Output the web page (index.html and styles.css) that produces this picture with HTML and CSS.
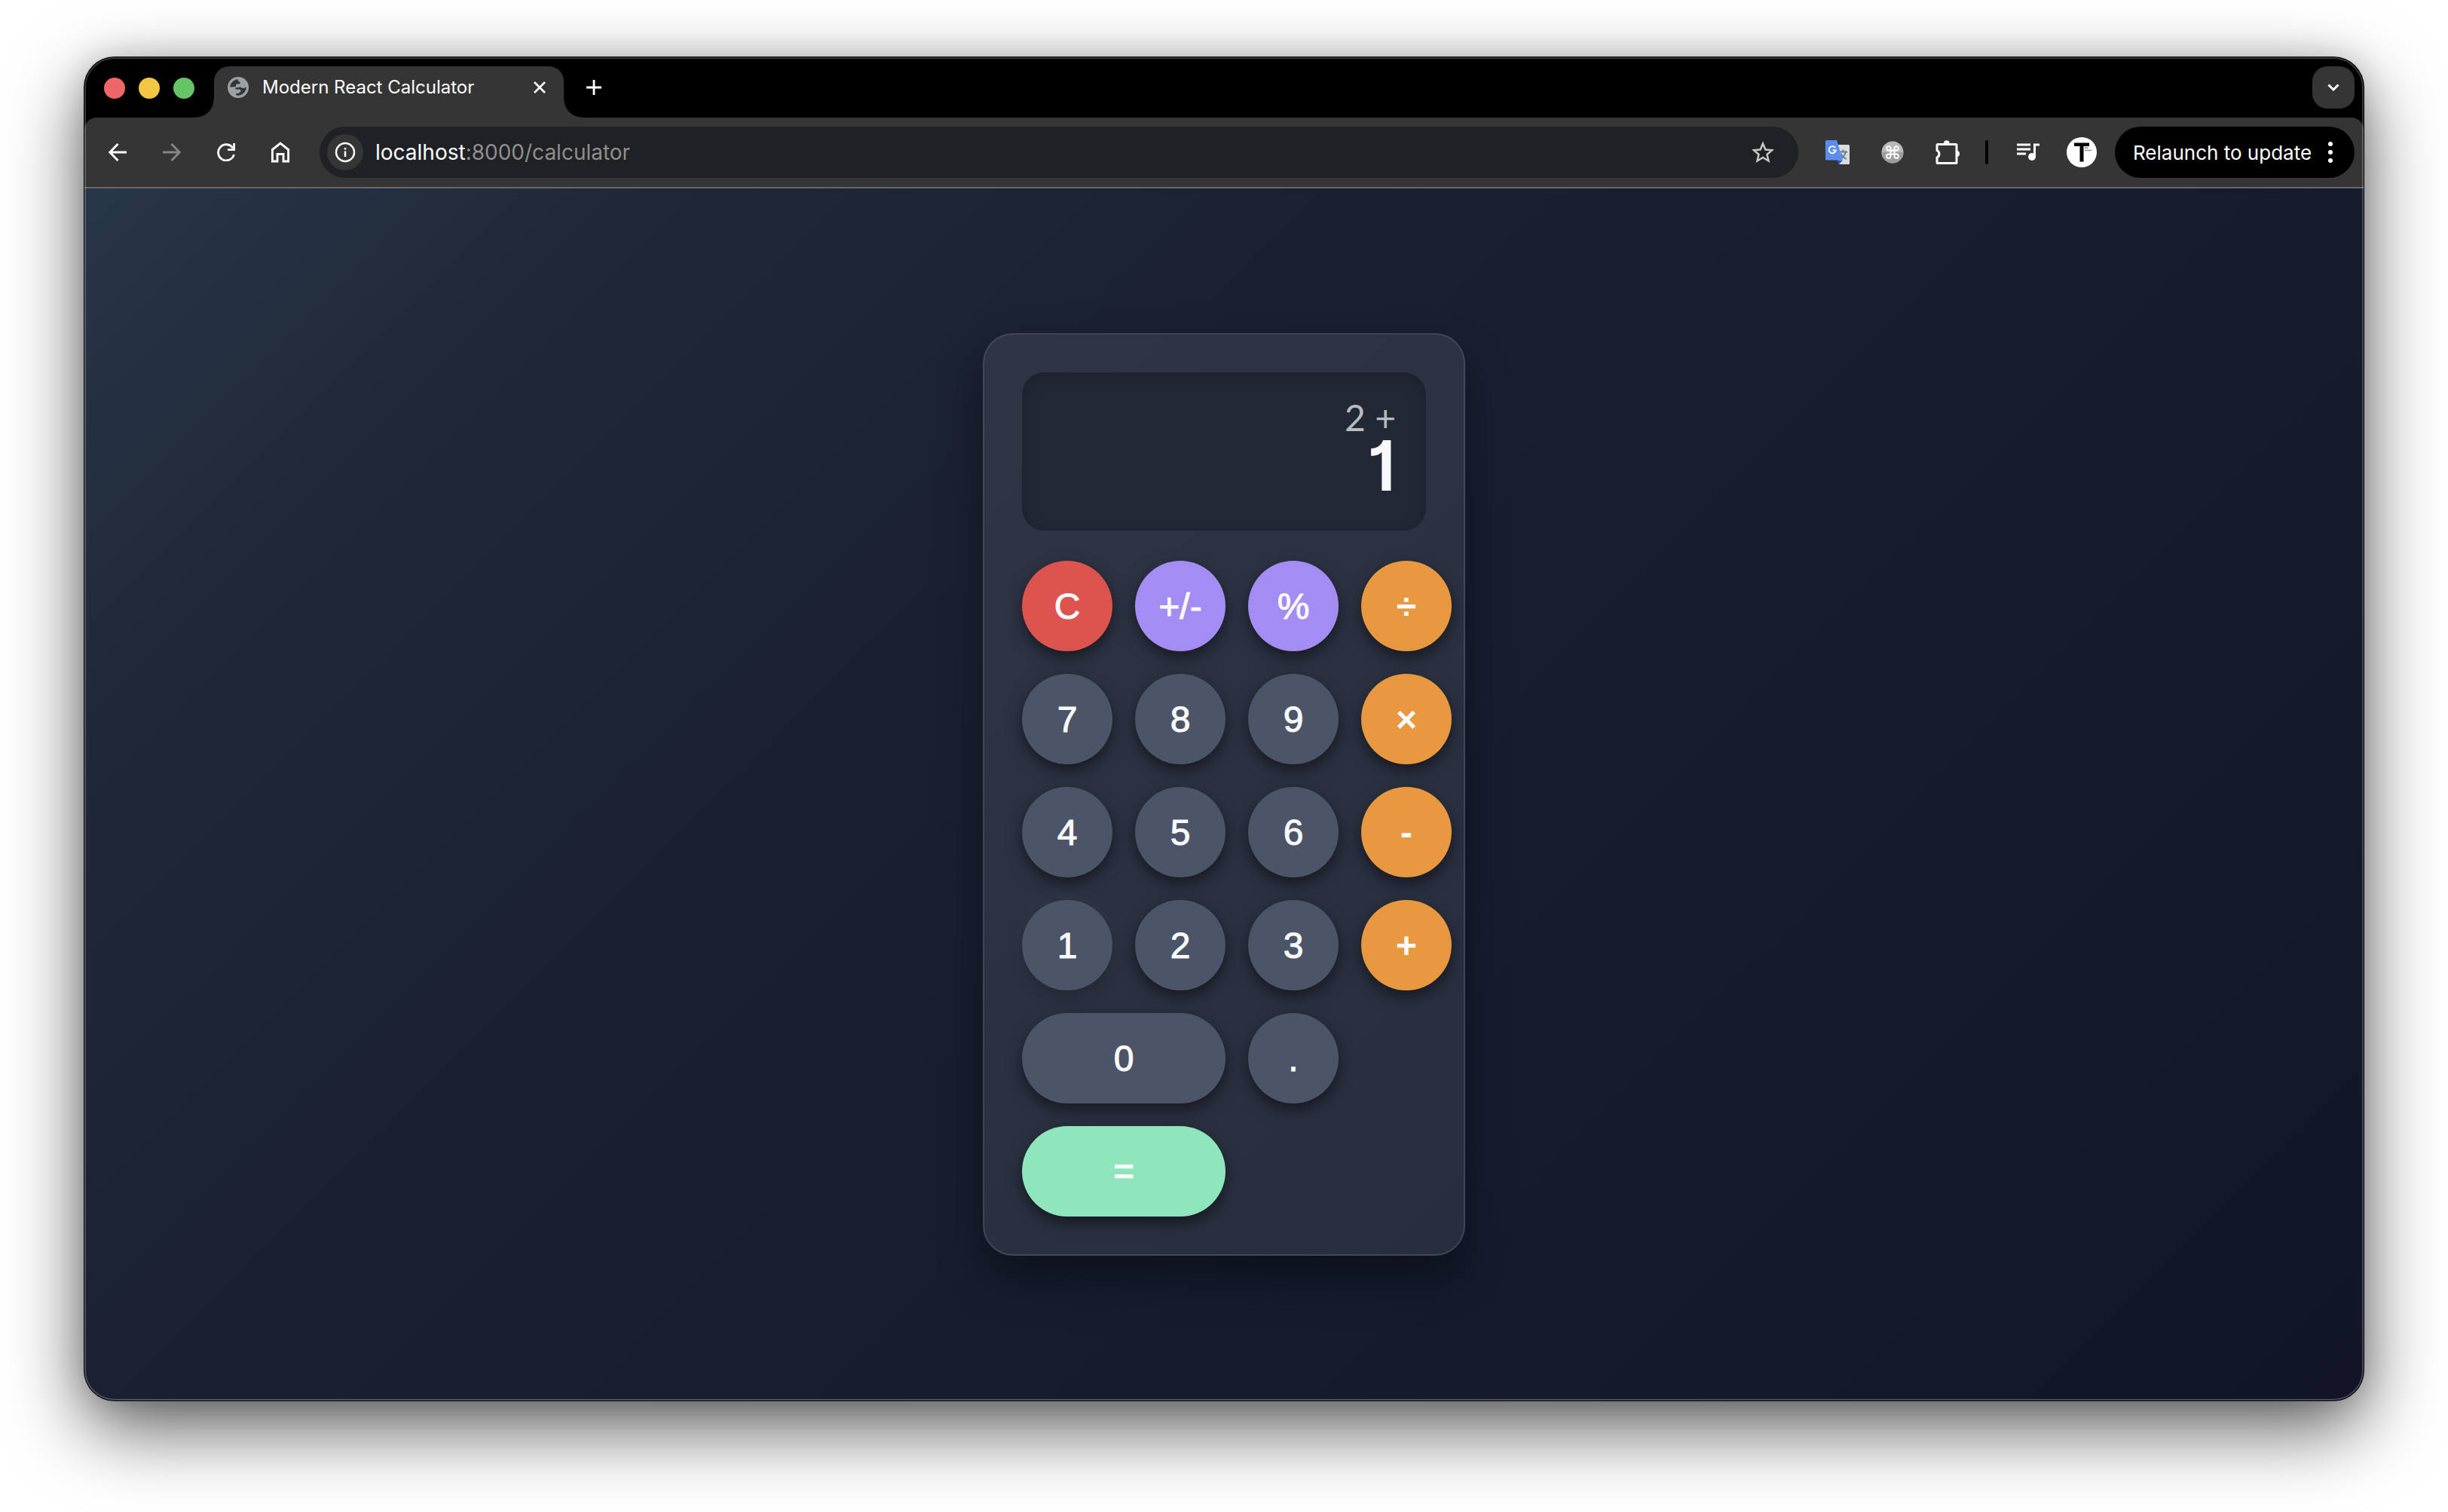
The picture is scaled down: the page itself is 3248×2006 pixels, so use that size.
FILE: index.html
```html
<!DOCTYPE html>
<html lang="en">
<head>
<meta charset="utf-8">
<title>Modern React Calculator</title>
<link rel="stylesheet" href="styles.css">
</head>
<body>
<div class="window">
  <header class="tabstrip">
    <div class="lights">
      <span class="light light-close"></span>
      <span class="light light-min"></span>
      <span class="light light-max"></span>
    </div>
    <div class="tab">
      <svg class="favicon" viewBox="0 0 28 28"><circle cx="14" cy="14" r="14" fill="#9aa0a6"/><path d="M3.200 13.500C3.500 8 8 3.500 14 3.200L13.500 5l3 2q1 2.500-2 2.500h-2.500q-1 .5-1 2v1.500zM17 13.500l2.500 1.500q3 0 5.300-1.500C24.800 20 19 25.500 12 24.600q-1.500-.6-1-2.600h3.500q1-2 3-2.500q.5-2-1.500-3h-4.500q-1.500-.5-1.500-2z" fill="#353535"/></svg>
      <span class="tab-title">Modern React Calculator</span>
      <button class="icon-btn tab-close" aria-label="Close tab"><svg width="16" height="16" viewBox="0 0 16 16"><path d="M1 1l14 14M15 1L1 15" stroke="#fff" stroke-width="2.500"/></svg></button>
    </div>
    <button class="icon-btn new-tab" aria-label="New tab"><svg width="20" height="20" viewBox="0 0 20 20"><path d="M10 0v20M0 10h20" stroke="#fff" stroke-width="2.800"/></svg></button>
    <button class="icon-btn tab-search" aria-label="Search tabs"><svg width="16" height="12" viewBox="0 0 16 12"><path d="M1.500 2.500L8 9l6.500-6.500" fill="none" stroke="#fff" stroke-width="3"/></svg></button>
  </header>
  <nav class="toolbar">
    <div class="nav-buttons">
      <button class="icon-btn nav-btn" aria-label="Back"><svg width="24" height="24" viewBox="0 0 24 24"><path d="M24 12H2M12.500 1L1.800 12l10.700 11" fill="none" stroke="#fff" stroke-width="2.900"/></svg></button>
      <button class="icon-btn nav-btn" aria-label="Forward"><svg width="24" height="24" viewBox="0 0 24 24"><path d="M0 12h22M11.500 1l10.700 11-10.700 11" fill="none" stroke="#868686" stroke-width="2.900"/></svg></button>
      <button class="icon-btn nav-btn" aria-label="Reload"><svg width="24" height="24" viewBox="0 0 24 24"><path d="M22.400 15A10.600 10.600 0 1 1 21 6.500M22.600 0v8.600H14" fill="none" stroke="#fff" stroke-width="2.800"/></svg></button>
      <button class="icon-btn nav-btn" aria-label="Home"><svg width="26" height="28" viewBox="0 0 26 28"><path d="M2.400 10.500L13 2l10.600 8.500V26h-6.600v-9.500h-8V26H2.400z" fill="none" stroke="#fff" stroke-width="2.900"/></svg></button>
    </div>
    <div class="omnibox">
      <button class="icon-btn site-info" aria-label="Site information"><svg width="28" height="28" viewBox="0 0 28 28"><circle cx="14" cy="14" r="12" fill="none" stroke="#fff" stroke-width="2.500"/><path d="M14 12.500v7.500M14 8v2.600" stroke="#fff" stroke-width="2.500"/></svg></button>
      <a class="url" href="#"><span class="host">localhost</span>:8000/calculator</a>
      <button class="icon-btn star" aria-label="Bookmark"><svg width="30" height="30" viewBox="0 0 30 30"><path d="M15 3.500l3.400 8 8.600.8-6.500 5.700 2 8.500L15 22l-7.500 4.500 2-8.500L3 12.300l8.600-.8z" fill="none" stroke="#c7c7c7" stroke-width="2.500"/></svg></button>
    </div>
    <div class="extensions">
      <button class="icon-btn ext" aria-label="Translate"><svg width="32" height="32" viewBox="0 0 32 32"><path d="M12 6h18.500a1.500 1.500 0 0 1 1.500 1.500v23a1.500 1.500 0 0 1-1.500 1.500H18z" fill="#dcdcdc"/><path d="M18 15.500h11M23.500 12.500v3M27 15.500c-1 4-4 7.500-7 9M20.500 18c1.500 3 4 5.500 7.500 7" fill="none" stroke="#607d8b" stroke-width="1.800"/><path d="M16 26.500h7L18 32z" fill="#3a4fc0"/><path d="M1.500 0H15l8 26.500H1.500A1.500 1.500 0 0 1 0 25V1.500A1.500 1.500 0 0 1 1.500 0z" fill="#5b8def"/><path d="M13 10a4.600 4.600 0 1 0 .8 3.500H9.500" fill="none" stroke="#fff" stroke-width="1.900"/></svg></button>
      <button class="icon-btn ext" aria-label="Shortcuts"><svg width="32" height="32" viewBox="0 0 32 32"><circle cx="16" cy="16" r="14.500" fill="#b9b9b9"/><path d="M1.500 16a14.500 14.500 0 0 0 29 0z" fill="#9d9d9d"/><path d="M13.500 13.500h5v5h-5zM13.500 13.500h-2.700a2.700 2.700 0 1 1 2.700-2.700zM18.500 13.500v-2.700a2.700 2.700 0 1 1 2.700 2.700zM18.500 18.500h2.700a2.700 2.700 0 1 1-2.700 2.700zM13.500 18.500v2.700a2.700 2.700 0 1 1-2.700-2.700z" fill="none" stroke="#fff" stroke-width="1.900"/></svg></button>
      <button class="icon-btn ext" aria-label="Extensions"><svg width="32" height="32" viewBox="0 0 32 32"><path d="M3 5.500h24a1 1 0 0 1 1 1v23a1 1 0 0 1-1 1H3a1 1 0 0 1-1-1v-6.500a5.300 5.300 0 0 0 0-9.500V6.500a1 1 0 0 1 1-1z" fill="none" stroke="#fff" stroke-width="3"/><path d="M11 4a3.800 3.800 0 0 1 7.600 0zM28 14a3.800 3.800 0 0 1 0 8z" fill="#fff"/></svg></button>
    </div>
    <span class="divider"></span>
    <div class="profile">
      <button class="icon-btn media" aria-label="Media"><svg width="32" height="26" viewBox="0 0 32 26"><path d="M0 3h18M0 9h18M0 15h12" stroke="#fff" stroke-width="3"/><path d="M23.500 19V3h6.500" fill="none" stroke="#fff" stroke-width="3"/><circle cx="20" cy="19" r="5" fill="#fff"/></svg></button>
      <button class="icon-btn avatar" aria-label="Profile"><svg width="40" height="40" viewBox="0 0 40 40"><circle cx="20" cy="20" r="20" fill="#fff"/><path d="M10 7.500h20v4.500h-7.500v20.500h-5V12H10z" fill="#000"/><path d="M24 14.300h5M24 17.500h9" stroke="#777" stroke-width="1.500" stroke-dasharray="2 .5"/></svg></button>
    </div>
    <button class="relaunch">Relaunch to update<svg width="6" height="28" viewBox="0 0 6 28"><circle cx="3" cy="3" r="3"/><circle cx="3" cy="14" r="3"/><circle cx="3" cy="25" r="3"/></svg></button>
  </nav>
  <main class="page">
    <section class="calculator" aria-label="Calculator">
      <div class="display">
        <div class="previous">2 +</div>
        <div class="current">1</div>
      </div>
      <div class="keys">
        <button class="key clear">C</button>
        <button class="key function">+/-</button>
        <button class="key function">%</button>
        <button class="key operator">÷</button>
        <button class="key">7</button>
        <button class="key">8</button>
        <button class="key">9</button>
        <button class="key operator">×</button>
        <button class="key">4</button>
        <button class="key">5</button>
        <button class="key">6</button>
        <button class="key operator">-</button>
        <button class="key hovered">1</button>
        <button class="key">2</button>
        <button class="key">3</button>
        <button class="key operator">+</button>
        <button class="key wide">0</button>
        <button class="key">.</button>
        <button class="key wide equals">=</button>
      </div>
    </section>
  </main>
</div>
</body>
</html>
```

FILE: styles.css
```css
* { box-sizing: border-box; }

body {
  margin: 0;
  min-height: 100vh;
  padding: 76px 112px 148px;
  display: flex;
  background: #fff;
  font-family: Inter, "Liberation Sans", sans-serif;
}

button {
  margin: 0;
  padding: 0;
  border: 0;
  font: inherit;
  color: inherit;
  background: none;
}

svg { display: block; }

.icon-btn {
  display: flex;
  align-items: center;
  justify-content: center;
  flex: none;
}

/* Browser window */
.window {
  position: relative;
  flex: 1;
  display: flex;
  flex-direction: column;
  border-radius: 40px;
  overflow: hidden;
  background: #000;
  box-shadow: 0 0 0 1px #000, 0 36px 100px rgba(0, 0, 0, 0.65), 0 0 40px rgba(0, 0, 0, 0.15);
}

.window::after {
  content: "";
  position: absolute;
  inset: 0;
  border: 2px solid rgba(255, 255, 255, 0.22);
  border-radius: 40px;
  pointer-events: none;
}

.tabstrip {
  height: 80px;
  padding: 12px 12px 0 26px;
  display: flex;
  align-items: flex-start;
}

.lights {
  display: flex;
  align-items: center;
  gap: 18px;
  height: 58px;
  margin-right: 26px;
}

.light { width: 28px; height: 28px; border-radius: 50%; }
.light-close { background: #ec6765; }
.light-min { background: #f2c744; }
.light-max { background: #65c466; }

.tab {
  position: relative;
  display: flex;
  align-items: center;
  width: 464px;
  height: 68px;
  padding: 0 20px 12px 18px;
  border-radius: 20px 20px 0 0;
  background: #353535;
}

.tab::before,
.tab::after {
  content: "";
  position: absolute;
  bottom: 0;
  width: 24px;
  height: 24px;
}

.tab::before { left: -24px; background: radial-gradient(circle at 0 0, transparent 23px, #353535 24px); }
.tab::after { right: -24px; background: radial-gradient(circle at 100% 0, transparent 23px, #353535 24px); }

.favicon { width: 28px; height: 28px; flex: none; }

.tab-title {
  flex: 1;
  margin-left: 18px;
  color: #fff;
  font-size: 24px;
  line-height: 32px;
  white-space: nowrap;
}

.tab-close { width: 24px; height: 24px; }
.new-tab { width: 56px; height: 56px; margin-left: 12px; }
.tab-search { width: 56px; height: 56px; margin-left: auto; border-radius: 20px; background: #353535; }

/* Toolbar */
.toolbar {
  height: 94px;
  padding: 0 12px 0 8px;
  display: flex;
  align-items: center;
  background: #353535;
  border-bottom: 2px solid #6a6769;
  border-radius: 16px 16px 0 0;
}

.nav-buttons { display: flex; }
.nav-btn { width: 72px; height: 56px; }

.omnibox {
  flex: 1;
  display: flex;
  align-items: center;
  height: 68px;
  margin-left: 16px;
  padding: 0 32px 0 10px;
  border-radius: 34px;
  background: #202124;
}

.site-info { width: 48px; height: 48px; border-radius: 50%; background: #353535; }

.url {
  flex: 1;
  margin-left: 16px;
  color: #8f8f8f;
  font-size: 28px;
  line-height: 36px;
  text-decoration: none;
}

.host { color: #fff; }

.extensions { display: flex; gap: 41px; margin-left: 36px; }
.divider { width: 4px; height: 32px; margin: 0 38px 0 34px; border-radius: 2px; background: #000; }
.profile { display: flex; align-items: center; gap: 34px; }

.relaunch {
  display: flex;
  align-items: center;
  justify-content: space-between;
  width: 318px;
  height: 68px;
  margin-left: 24px;
  padding: 0 29px 0 24px;
  border-radius: 34px;
  background: #000;
  color: #fff;
  fill: #fff;
  font-size: 26px;
  white-space: nowrap;
}

/* Page */
.page {
  flex: 1;
  display: flex;
  align-items: center;
  justify-content: center;
  background: linear-gradient(135deg, #283649 0%, #1f2838 16%, #1b2133 35%, #161c2e 65%, #111527 100%);
}

.calculator {
  width: 640px;
  padding: 50px;
  border: 2px solid rgba(255, 255, 255, 0.1);
  border-radius: 40px;
  background: linear-gradient(135deg, #2f3545, #292e3e);
  box-shadow: 0 30px 60px rgba(0, 0, 0, 0.4);
}

.display {
  height: 210px;
  margin-bottom: 40px;
  padding: 32px 40px;
  border-radius: 30px;
  background: #232835;
  box-shadow: inset 0 4px 20px rgba(0, 0, 0, 0.2);
  text-align: right;
}

.previous { color: #b9bbc0; font-family: Lato, sans-serif; font-size: 48px; line-height: 56px; }
.current {
  color: #f8f9fc;
  font-size: 92px;
  font-weight: 600;
  line-height: 72px;
  font-feature-settings: "cv01";
}

.keys {
  display: grid;
  grid-template-columns: repeat(4, 120px);
  grid-auto-rows: 120px;
  gap: 30px;
}

.key {
  border-radius: 60px;
  background: #4c5467;
  color: #f9fafc;
  font-family: "Liberation Sans", Arial, sans-serif;
  font-size: 48px;
  font-weight: 400;
  -webkit-text-stroke: 1px #f9fafc;
  box-shadow: 0 8px 20px rgba(0, 0, 0, 0.5);
}

.operator,
.equals { font-weight: 700; -webkit-text-stroke: 0; }

.wide { grid-column: span 2; }
.clear { background: #dd534d; }
.function { background: #a38df3; }
.operator { background: #e8983e; }
.equals { background: #8fe6bd; }
.hovered { box-shadow: 0 8px 20px rgba(0, 0, 0, 0.3), 0 0 30px rgba(255, 255, 255, 0.06); }
```
